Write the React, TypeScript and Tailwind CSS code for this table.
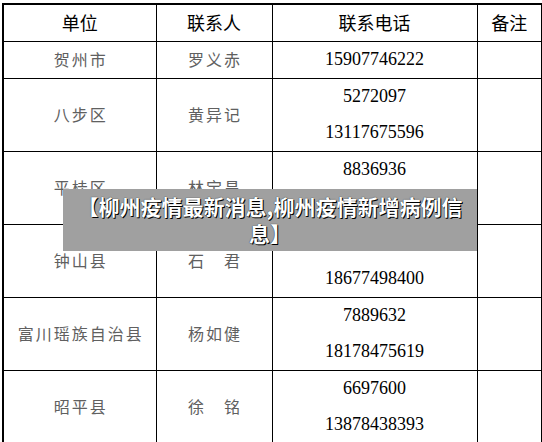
import React from "react";

type Row = { unit: string; name: string; phones: string[]; h: string };

const rows: Row[] = [
  { unit: "贺州市", name: "罗义赤", phones: ["15907746222"], h: "h-[37px]" },
  { unit: "八步区", name: "黄异记", phones: ["5272097", "13117675596"], h: "h-[73px]" },
  { unit: "平桂区", name: "林宝昌", phones: ["8836936", "13877478588"], h: "h-[73px]" },
  { unit: "钟山县", name: "石　君", phones: ["5122388", "18677498400"], h: "h-[73px]" },
  { unit: "富川瑶族自治县", name: "杨如健", phones: ["7889632", "18178475619"], h: "h-[72px]" },
  { unit: "昭平县", name: "徐　铭", phones: ["6697600", "13878438393"], h: "h-[73px]" },
];

const cjk = "font-['Noto_Sans_CJK_SC','Noto_Sans',sans-serif]";

export default function App() {
  return (
    <div className="relative w-[542px] h-[442px] bg-white overflow-hidden">
      <div className="pt-[3px] pl-[2px]">
        <table className="w-[539px] table-fixed border-collapse border-2 border-black">
          <colgroup>
            <col className="w-[153px]" />
            <col className="w-[116px]" />
            <col className="w-[205px]" />
            <col className="w-[65px]" />
          </colgroup>
          <thead>
            <tr className="h-[37px]">
              {["单位", "联系人", "联系电话", "备注"].map((t) => (
                <th
                  key={t}
                  className={`border border-black p-0 pb-[2px] text-center align-middle text-[18px] font-normal text-black leading-none ${cjk}`}
                >
                  {t}
                </th>
              ))}
            </tr>
          </thead>
          <tbody>
            {rows.map((r) => (
              <tr key={r.unit} className={r.h}>
                <td
                  className={`border border-black p-0 pb-[2px] text-center align-middle text-[16px] tracking-[2px] text-[#606060] leading-none ${cjk}`}
                >
                  <span className="mr-[-2px]">{r.unit}</span>
                </td>
                <td
                  className={`border border-black p-0 pb-[2px] text-center align-middle text-[16px] tracking-[2px] text-[#606060] leading-none whitespace-pre ${cjk}`}
                >
                  <span className="mr-[-2px]">{r.name}</span>
                </td>
                <td className="border border-black p-0 align-middle">
                  <div className="flex flex-col">
                    {r.phones.map((p) => (
                      <div
                        key={p}
                        className="h-[36px] flex items-center justify-center font-['Liberation_Serif',serif] text-[18px] text-black"
                      >
                        {p}
                      </div>
                    ))}
                  </div>
                </td>
                <td className="border border-black p-0"></td>
              </tr>
            ))}
          </tbody>
        </table>
      </div>

      <div
        className={`absolute left-[63px] top-[189px] w-[414px] h-[62px] bg-[#a0a0a0] px-[12px] pt-[4px] text-center text-white font-bold text-[21px] leading-[27px] [text-shadow:1px_1px_0_#000,0_0_1px_#000] ${cjk}`}
      >
        【柳州疫情最新消息,柳州疫情新增病例信息】
      </div>
    </div>
  );
}
